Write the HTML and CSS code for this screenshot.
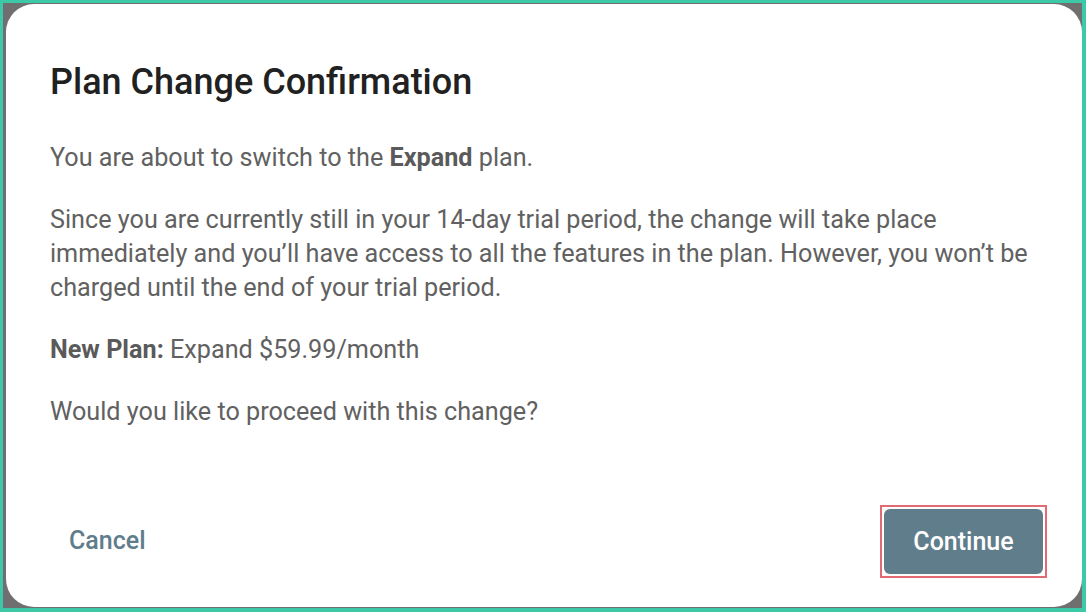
FILE: index.html
```html
<!DOCTYPE html>
<html lang="en">
<head>
<meta charset="utf-8">
<title>Plan Change Confirmation</title>
<link rel="stylesheet" href="styles.css">
</head>
<body>
<div class="frame">
  <div class="dialog" role="dialog" aria-labelledby="dlg-title">
    <div class="dialog-body">
      <h1 id="dlg-title" class="dialog-title">Plan Change Confirmation</h1>
      <p class="text">You are about to switch to the <strong>Expand</strong> plan.</p>
      <p class="text">Since you are currently still in your 14-day trial period, the change will take place immediately and you’ll have access to all the features in the plan. However, you won’t be charged until the end of your trial period.</p>
      <p class="text"><strong>New Plan:</strong> Expand $59.99/month</p>
      <p class="text">Would you like to proceed with this change?</p>
    </div>
    <div class="dialog-actions">
      <button class="btn btn-text" type="button">Cancel</button>
      <span class="focus-ring"><button class="btn btn-primary" type="button">Continue</button></span>
    </div>
  </div>
</div>
</body>
</html>
```
FILE: styles.css
```css
html, body {
  margin: 0;
  padding: 0;
}
body {
  width: 1086px;
  height: 612px;
  overflow: hidden;
  font-family: Roboto, "Liberation Sans", sans-serif;
}
.frame {
  box-sizing: border-box;
  width: 1086px;
  height: 612px;
  border-style: solid;
  border-color: #3dc9a7;
  border-width: 3px 4px 4px 3px;
  background: #6f6f6f;
  display: flex;
  padding: 1px 0 1px 3px;
}
.dialog {
  flex: 1;
  background: #ffffff;
  border-radius: 28px;
  display: flex;
  flex-direction: column;
  justify-content: space-between;
  padding: 58px 35px 29px 44px;
}
.dialog-title {
  margin: 0 0 39px;
  font-size: 36px;
  line-height: 40px;
  font-weight: 500;
  color: #212121;
  letter-spacing: 0;
}
.text {
  margin: 0 0 28px;
  font-size: 25.2px;
  line-height: 34px;
  color: #616161;
}
.text:last-child {
  margin-bottom: 0;
}
.text strong {
  font-weight: 700;
  color: #5a5a5a;
}
.dialog-actions {
  display: flex;
  justify-content: space-between;
  align-items: center;
}
.btn {
  font-family: Roboto, "Liberation Sans", sans-serif;
  font-size: 25px;
  font-weight: 500;
  border: none;
  cursor: pointer;
}
.btn-text {
  background: transparent;
  color: #607d8b;
  padding: 14px 19px;
  margin-bottom: 2px;
}
.focus-ring {
  display: flex;
  border: 2px solid #e06b73;
  padding: 2px;
}
.btn-primary {
  background: #607d8b;
  color: #ffffff;
  width: 159px;
  height: 65px;
  border-radius: 6px;
}
```
